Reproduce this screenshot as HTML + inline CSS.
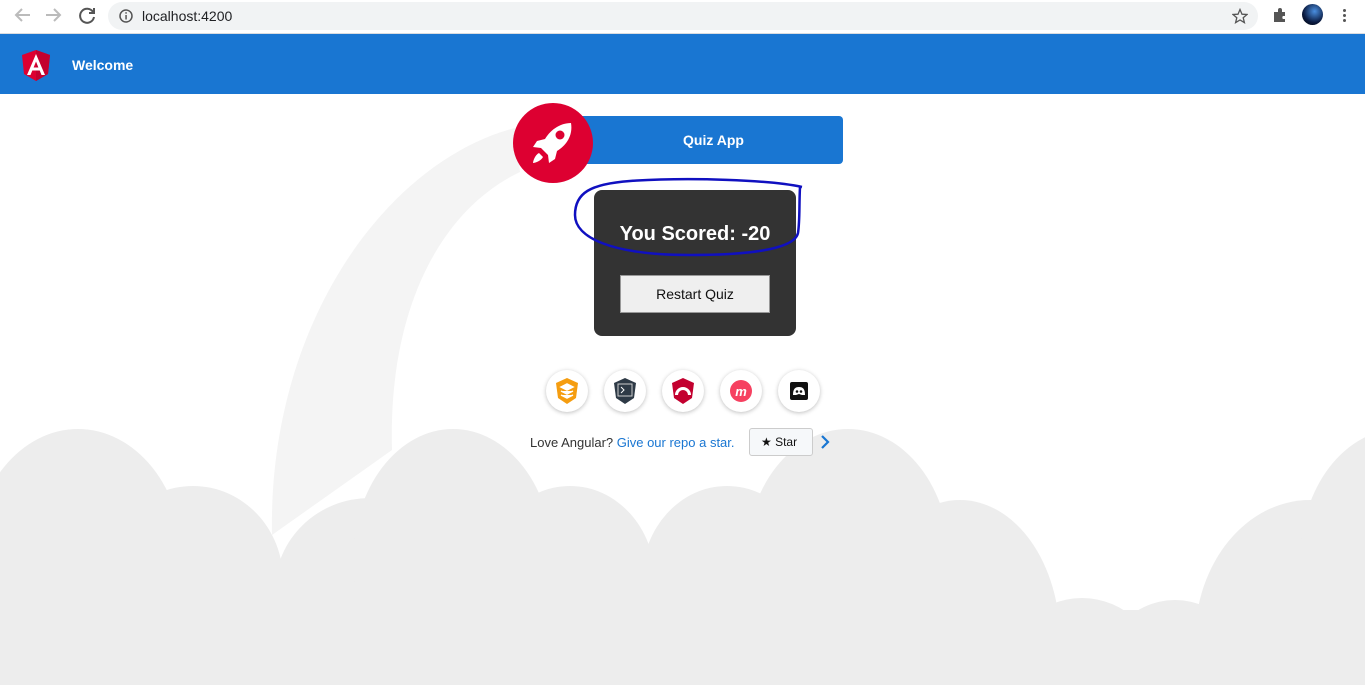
<!DOCTYPE html>
<html><head><meta charset="utf-8"><style>
*{margin:0;padding:0;box-sizing:border-box}
html,body{width:1365px;height:685px;overflow:hidden}
body{background:#fff;font-family:"Liberation Sans",sans-serif;position:relative}
.chrome{position:absolute;left:0;top:0;width:1365px;height:34px;background:#fff;border-bottom:1px solid #dadce0}
.addr{position:absolute;left:108px;top:2px;width:1150px;height:28px;border-radius:14px;background:#f1f3f4}
.addr span{position:absolute;left:34px;top:6px;font-size:14px;color:#202124}
.bar{position:absolute;left:0;top:34px;width:1365px;height:60px;background:#1976d2}
.bar .t{position:absolute;left:72px;top:23px;color:#fff;font-weight:bold;font-size:14px}
.quiz{position:absolute;left:578px;top:116px;width:265px;height:48px;background:#1976d2;border-radius:4px;color:#fff;font-weight:bold;font-size:14px;text-align:center;line-height:48px;padding-left:6px}
.rk{position:absolute;left:513px;top:103px;width:80px;height:80px;border-radius:50%;background:#dd0031}
.card{position:absolute;left:594px;top:190px;width:202px;height:146px;background:#333;border-radius:8px}
.card h2{position:absolute;left:0;width:100%;top:33px;text-align:center;color:#fff;font-size:20px;font-family:"Liberation Sans",sans-serif;font-weight:bold}
.btn{position:absolute;left:26px;top:85px;width:150px;height:38px;background:#efefef;border:1px solid #999;color:#111;font-size:14px;text-align:center;line-height:36px}
.ic{position:absolute;top:370px;width:42px;height:42px;border-radius:50%;background:#fff;box-shadow:0 1px 4px rgba(0,0,0,.25)}
.love{position:absolute;left:530px;top:435px;font-size:13px;color:#333}
.love a{color:#1976d2;text-decoration:none}
.star{position:absolute;left:749px;top:428px;width:64px;height:28px;border:1px solid #ccc;border-radius:3px;background:#f6f8fa;font-size:12px;line-height:26px;padding-left:11px;color:#111}
</style></head><body>
<svg style="position:absolute;left:0;top:0" width="1365" height="685">
<path d="M272,535 C268,320 390,160 515,128 L520,172 C440,210 388,310 392,450 Z" fill="#f4f4f4"/>
<g fill="#ededed">
<ellipse cx="78" cy="560" rx="105" ry="131"/>
<ellipse cx="193" cy="580" rx="90" ry="94"/>
<ellipse cx="370" cy="590" rx="95" ry="92"/>
<ellipse cx="453" cy="560" rx="100" ry="131"/>
<ellipse cx="570" cy="580" rx="85" ry="94"/>
<ellipse cx="727" cy="580" rx="85" ry="94"/>
<ellipse cx="848" cy="560" rx="102" ry="131"/>
<ellipse cx="960" cy="640" rx="100" ry="140"/>
<ellipse cx="1082" cy="680" rx="80" ry="82"/>
<ellipse cx="1175" cy="690" rx="80" ry="90"/>
<ellipse cx="1310" cy="640" rx="115" ry="140"/>
<ellipse cx="1400" cy="560" rx="100" ry="131"/>
<rect x="0" y="610" width="1365" height="75"/>
</g>
</svg>
<div class="chrome">
<svg style="position:absolute;left:12px;top:6px" width="90" height="20" fill="none" stroke-width="2">
<path d="M18,9H4M10,3L4,9L10,15" stroke="#bbb"/>
<path d="M34,9H48M42,3L48,9L42,15" stroke="#bbb"/>
<path d="M81,6A7,7 0 1 0 82,11M82,2V7H77" stroke="#555"/>
</svg>
<div class="addr"><svg style="position:absolute;left:11px;top:7px" width="14" height="14"><circle cx="7" cy="7" r="6" fill="none" stroke="#555" stroke-width="1.5"/><rect x="6.3" y="6" width="1.5" height="4.5" fill="#555"/><rect x="6.3" y="3.2" width="1.5" height="1.5" fill="#555"/></svg><span>localhost:4200</span>
<svg style="position:absolute;left:1124px;top:6px" width="16" height="16"><path d="M8,1.5L10,6.2L15,6.5L11.2,9.7L12.4,14.6L8,12L3.6,14.6L4.8,9.7L1,6.5L6,6.2Z" fill="none" stroke="#555" stroke-width="1.3"/></svg></div>
<svg style="position:absolute;left:1272px;top:7px" width="16" height="16"><path d="M2,5H6V3A2,2 0 0 1 10,3V5H13V9H11A2,2 0 0 0 11,12H13V15H2Z" fill="#555"/></svg>
<div style="position:absolute;left:1302px;top:4px;width:21px;height:21px;border-radius:50%;background:radial-gradient(circle at 60% 35%,#4a8fe0,#0a1a40 60%,#000)"></div>
<div style="position:absolute;left:1343px;top:9px;width:3px;height:3px;background:#555;border-radius:50%;box-shadow:0 5px 0 #555,0 10px 0 #555"></div>
</div>
<div class="bar">
<svg style="position:absolute;left:21px;top:16px" width="30" height="32"><path d="M15,0L29,5L27,24L15,31L3,24L1,5Z" fill="#dd0031"/><path d="M15,0L29,5L27,24L15,31Z" fill="#c3002f"/><path d="M15,4L6,25H9.5L11.3,20.5H18.7L20.5,25H24ZM12.6,17.5L15,11.5L17.4,17.5Z" fill="#fff"/></svg>
<div class="t">Welcome</div></div>
<div class="quiz">Quiz App</div>
<div class="rk"><svg width="80" height="80"><path d="M58,20C48,20 38,26 32,36L24,38L20,44L28,45L35,52L36,60L42,56L44,48C54,42 60,32 58,20Z" fill="#fff"/><circle cx="47" cy="32" r="4.5" fill="#dd0031"/><path d="M26,50C22,52 20,58 20,60C22,60 28,58 30,54Z" fill="#fff"/></svg></div>
<div class="card"><h2>You Scored: -20</h2><div class="btn">Restart Quiz</div></div>
<svg style="position:absolute;left:570px;top:175px" width="240" height="90"><path d="M232,12C200,5 120,2 60,6C20,9 5,18 5,40C5,62 40,80 120,80C190,80 225,72 228,58C230,45 229,30 230,12" fill="none" stroke="#1010c0" stroke-width="2.5"/></svg>
<div class="ic" style="left:546px"><svg width="42" height="42"><path d="M21,8L32,13L30,28L21,34L12,28L10,13Z" fill="#f59d10"/><path d="M15,17L21,14L27,17L21,20ZM15,21L21,24L27,21M15,25L21,28L27,25" fill="#fff" stroke="#fff" stroke-width="1.5"/></svg></div>
<div class="ic" style="left:604px"><svg width="42" height="42"><path d="M21,8L32,13L30,28L21,34L12,28L10,13Z" fill="#2e3a46"/><rect x="14" y="14" width="14" height="12" fill="none" stroke="#ccc"/><path d="M17,17L20,20L17,23" stroke="#fff" fill="none"/></svg></div>
<div class="ic" style="left:662px"><svg width="42" height="42"><path d="M21,8L32,13L30,28L21,34L12,28L10,13Z" fill="#c3002f"/><path d="M13,25A8,8 0 0 1 29,25Z" fill="#fff"/><path d="M16,25A5,5 0 0 1 26,25Z" fill="#c3002f"/></svg></div>
<div class="ic" style="left:720px"><svg width="42" height="42"><circle cx="21" cy="21" r="11" fill="#f64060"/><text x="21" y="26" font-size="13" font-style="italic" font-weight="bold" fill="#fff" text-anchor="middle" font-family="Liberation Sans">m</text></svg></div>
<div class="ic" style="left:778px"><svg width="42" height="42"><rect x="12" y="12" width="18" height="18" rx="2" fill="#111"/><path d="M15,25C15,19 17,17 21,17C25,17 27,19 27,25L24,25L21,24L18,25Z" fill="#fff"/><circle cx="19" cy="21.5" r="1.3" fill="#111"/><circle cx="23" cy="21.5" r="1.3" fill="#111"/></svg></div>
<div class="love">Love Angular? <a>Give our repo a star.</a></div>
<div class="star">★ Star</div>
<svg style="position:absolute;left:819px;top:434px" width="12" height="16"><path d="M3,2L9,8L3,14" fill="none" stroke="#1976d2" stroke-width="2.2"/></svg>
</body></html>
